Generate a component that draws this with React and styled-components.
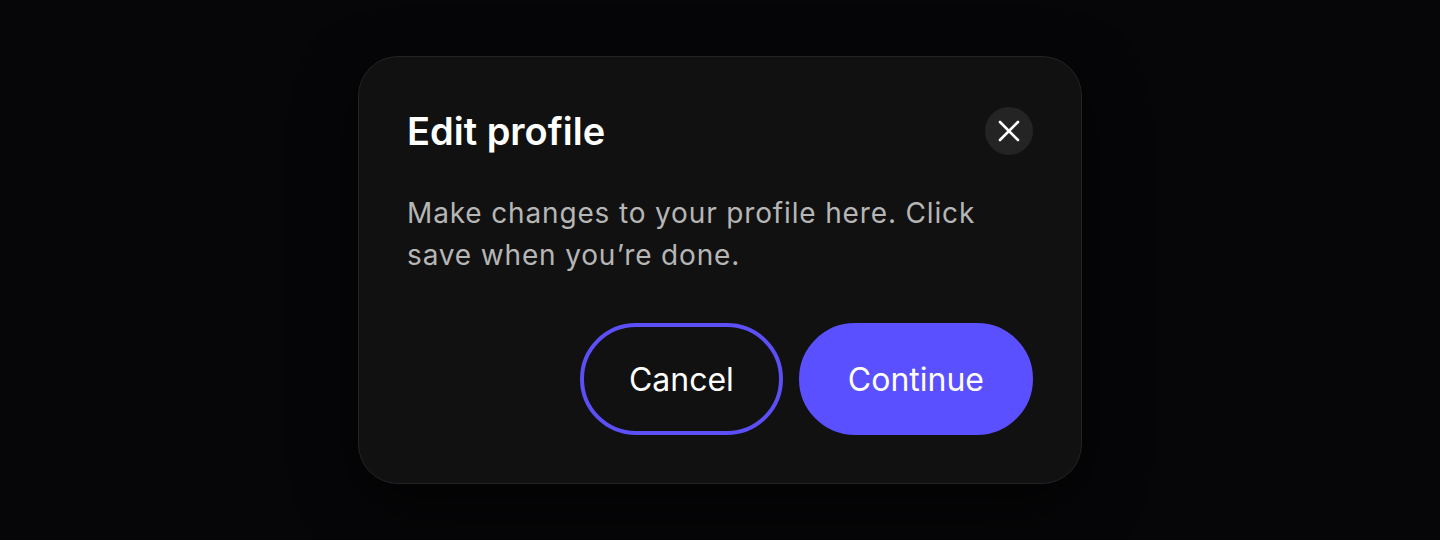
import React from 'react';
import styled, { createGlobalStyle } from 'styled-components';

const GlobalStyle = createGlobalStyle`
  * {
    box-sizing: border-box;
  }
  body {
    margin: 0;
    background-color: #060608;
    font-family: Inter, 'Noto Sans', sans-serif;
    -webkit-font-smoothing: antialiased;
  }
`;

const Page = styled.div`
  min-height: 100vh;
  display: flex;
  align-items: center;
  justify-content: center;
`;

const Dialog = styled.div`
  width: 724px;
  display: flex;
  flex-direction: column;
  padding: 48px;
  background-color: #111111;
  border: 1px solid #242424;
  border-radius: 40px;
  box-shadow: 0 20px 60px rgba(0, 0, 0, 0.6);
`;

const Header = styled.div`
  display: flex;
  align-items: center;
  justify-content: space-between;
  height: 52px;
`;

const Title = styled.h2`
  margin: 0;
  font-size: 38px;
  line-height: 52px;
  font-weight: 600;
  color: #ffffff;
`;

const CloseButton = styled.button`
  width: 48px;
  height: 48px;
  border: none;
  border-radius: 50%;
  background-color: #242424;
  display: flex;
  align-items: center;
  justify-content: center;
  padding: 0;
  cursor: pointer;
`;

const Description = styled.p`
  margin: 35px 0 0;
  font-size: 28px;
  line-height: 42px;
  letter-spacing: 0.85px;
  color: #b6b6b6;
`;

const Footer = styled.div`
  display: flex;
  justify-content: flex-end;
  gap: 16px;
  margin-top: 47px;
`;

const Button = styled.button`
  height: 112px;
  padding: 0 45px;
  border-radius: 56px;
  font-family: Inter, 'Noto Sans', sans-serif;
  font-size: 32px;
  font-weight: 400;
  color: #ffffff;
  cursor: pointer;
  border: 4px solid;
  background-color: ${({ primary }) => (primary ? '#5b50ff' : 'transparent')};
  border-color: ${({ primary }) => (primary ? '#5b50ff' : '#5b4ff5')};
`;

const CloseIcon = () => (
  <svg width="22" height="22" viewBox="0 0 22 22" fill="none">
    <path
      d="M2 2L20 20M20 2L2 20"
      stroke="#ffffff"
      strokeWidth="2.6"
      strokeLinecap="round"
    />
  </svg>
);

const App = () => {
  return (
    <Page>
      <GlobalStyle />
      <Dialog>
        <Header>
          <Title>Edit profile</Title>
          <CloseButton aria-label="Close">
            <CloseIcon />
          </CloseButton>
        </Header>
        <Description>
          Make changes to your profile here. Click save when you’re done.
        </Description>
        <Footer>
          <Button>Cancel</Button>
          <Button primary>Continue</Button>
        </Footer>
      </Dialog>
    </Page>
  );
};

export default App;
